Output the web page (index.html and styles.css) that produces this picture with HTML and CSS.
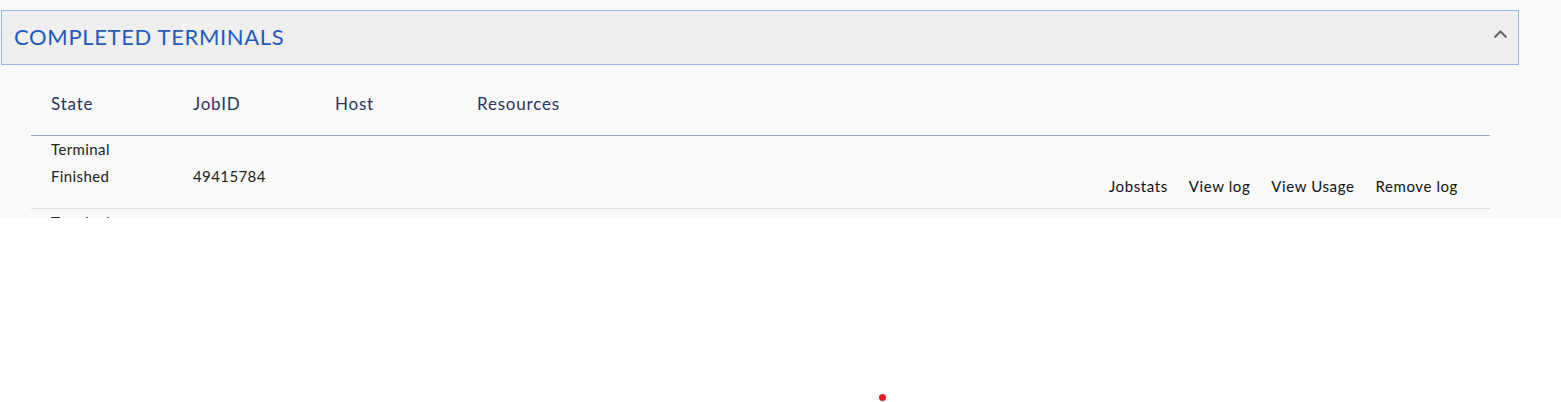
FILE: index.html
```html
<!DOCTYPE html>
<html>
<head>
<meta charset="utf-8">
<link rel="stylesheet" href="styles.css">
</head>
<body>
<div class="page">
  <section class="panel">
    <div class="panel-heading">
      <h2 class="panel-title">COMPLETED TERMINALS</h2>
      <svg class="chevron" width="15" height="9" viewBox="0 0 15 9"><polyline points="1.5,7.5 7.5,1.5 13.5,7.5" fill="none" stroke="#666" stroke-width="2"/></svg>
    </div>
    <div class="panel-body">
      <div class="table">
        <div class="thead">
          <div class="cell">State</div>
          <div class="cell">JobID</div>
          <div class="cell">Host</div>
          <div class="cell">Resources</div>
        </div>
        <div class="trow">
          <div class="cell state">
            <div>Terminal</div>
            <div>Finished</div>
          </div>
          <div class="cell jobid">49415784</div>
          <div class="cell host"></div>
          <div class="cell res"></div>
          <div class="actions">
            <a class="action">Jobstats</a>
            <a class="action">View log</a>
            <a class="action">View Usage</a>
            <a class="action">Remove log</a>
          </div>
        </div>
        <div class="trow">
          <div class="cell state">
            <div>Terminal</div>
            <div>Finished</div>
          </div>
          <div class="cell jobid">49415783</div>
          <div class="cell host"></div>
          <div class="cell res"></div>
          <div class="actions">
            <a class="action">Jobstats</a>
            <a class="action">View log</a>
            <a class="action">View Usage</a>
            <a class="action">Remove log</a>
          </div>
        </div>
      </div>
    </div>
  </section>
</div>
<span class="dot"></span>
</body>
</html>
```
FILE: styles.css
```css
html, body {
  margin: 0;
  padding: 0;
  background: #ffffff;
  font-family: Lato, "Open Sans", sans-serif;
}
.page {
  background: #f9f9f9;
  height: 218px;
  overflow: hidden;
  padding: 10px 42px 0 1px;
  box-sizing: border-box;
}
.panel-heading {
  height: 55px;
  box-sizing: border-box;
  border: 1px solid #98b6e6;
  background: #efefef;
  display: flex;
  align-items: center;
  justify-content: space-between;
  padding: 0 10px 0 12px;
}
.panel-title {
  margin: 0;
  font-weight: 400;
  font-size: 22px;
  color: #1f5bbd;
  letter-spacing: 0.65px;
  margin-top: -3px;
}
.chevron {
  margin-top: -7px;
}
.panel-body {
  padding: 0 29px 0 30px;
}
.thead {
  display: flex;
  border-bottom: 1px solid #9aa8c6;
  padding: 29px 0 21px 0;
  line-height: 20px;
  font-size: 17px;
  letter-spacing: 0.8px;
  color: #27365c;
}
.thead .cell, .trow .cell {
  width: 142px;
  padding-left: 20px;
  box-sizing: border-box;
}
.trow {
  display: flex;
  height: 73px;
  box-sizing: border-box;
  border-bottom: 1px solid #dddddd;
  font-size: 15px;
  letter-spacing: 0.4px;
  color: #222;
}
.state div {
  line-height: 27px;
}
.jobid {
  padding-top: 27px;
  line-height: 27px;
}
.actions {
  margin-left: auto;
  display: flex;
  gap: 21px;
  padding: 40px 32px 0 0;
  font-size: 15px;
  letter-spacing: 0.6px;
  line-height: 20px;
  color: #111;
}
.action {
  cursor: pointer;
}
.dot {
  position: absolute;
  left: 879px;
  top: 394px;
  width: 7px;
  height: 7px;
  border-radius: 50%;
  background: #e3191d;
}
```
